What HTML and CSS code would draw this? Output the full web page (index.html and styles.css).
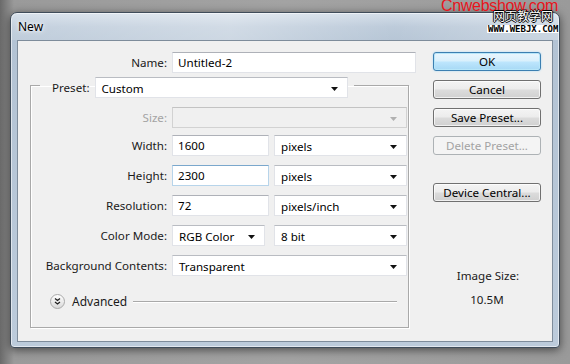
FILE: index.html
```html
<!DOCTYPE html>
<html>
<head>
<meta charset="utf-8">
<link rel="stylesheet" href="styles.css">
</head>
<body>
<div class="window">
  <div class="titlebar"><span class="title">New</span></div>
  <div class="client">
    <div class="leftcol">
      <div class="namerow">
        <label class="lbl">Name:</label>
        <div class="input name">Untitled-2</div>
      </div>
      <fieldset class="group">
        <legend class="legend">
          <span class="lbl">Preset:</span>
          <div class="select preset"><span>Custom</span><svg class="arrow" width="7" height="4" viewBox="0 0 7 4"><path d="M0 0h7L3.5 4z"/></svg></div>
        </legend>
        <div class="rows">
          <div class="row sizerow">
            <label class="lbl disabled">Size:</label>
            <div class="select wide disabled-sel"><span></span><svg class="arrow" width="7" height="4" viewBox="0 0 7 4"><path d="M0 0h7L3.5 4z"/></svg></div>
          </div>
          <div class="row">
            <label class="lbl">Width:</label>
            <div class="pair">
              <div class="input num">1600</div>
              <div class="select unit"><span>pixels</span><svg class="arrow" width="7" height="4" viewBox="0 0 7 4"><path d="M0 0h7L3.5 4z"/></svg></div>
            </div>
          </div>
          <div class="row">
            <label class="lbl">Height:</label>
            <div class="pair">
              <div class="input num hover">2300</div>
              <div class="select unit"><span>pixels</span><svg class="arrow" width="7" height="4" viewBox="0 0 7 4"><path d="M0 0h7L3.5 4z"/></svg></div>
            </div>
          </div>
          <div class="row">
            <label class="lbl">Resolution:</label>
            <div class="pair">
              <div class="input num">72</div>
              <div class="select unit"><span>pixels/inch</span><svg class="arrow" width="7" height="4" viewBox="0 0 7 4"><path d="M0 0h7L3.5 4z"/></svg></div>
            </div>
          </div>
          <div class="row">
            <label class="lbl">Color Mode:</label>
            <div class="pair">
              <div class="select mode"><span>RGB Color</span><svg class="arrow" width="7" height="4" viewBox="0 0 7 4"><path d="M0 0h7L3.5 4z"/></svg></div>
              <div class="select unit"><span>8 bit</span><svg class="arrow" width="7" height="4" viewBox="0 0 7 4"><path d="M0 0h7L3.5 4z"/></svg></div>
            </div>
          </div>
          <div class="row">
            <label class="lbl">Background Contents:</label>
            <div class="select wide"><span>Transparent</span><svg class="arrow" width="7" height="4" viewBox="0 0 7 4"><path d="M0 0h7L3.5 4z"/></svg></div>
          </div>
        </div>
        <div class="advanced">
          <span class="adv-btn"><svg width="15" height="15" viewBox="0 0 15 15"><defs><linearGradient id="g" x1="0" y1="0" x2="0" y2="1"><stop offset="0" stop-color="#ffffff"/><stop offset="1" stop-color="#d9d9d9"/></linearGradient></defs><circle cx="7.5" cy="7.5" r="7" fill="url(#g)" stroke="#a9a9a9"/><path d="M5 4.5l2.5 2 2.5-2M5 8l2.5 2 2.5-2" fill="none" stroke="#222" stroke-width="1.3"/></svg></span>
          <span class="adv-text">Advanced</span>
          <span class="adv-line"></span>
        </div>
      </fieldset>
    </div>
    <div class="rightcol">
      <div class="btn default">OK</div>
      <div class="btn">Cancel</div>
      <div class="btn">Save Preset...</div>
      <div class="btn disabled-btn">Delete Preset...</div>
      <div class="btn device">Device Central...</div>
      <div class="imgsize">Image Size:</div>
      <div class="imgval">10.5M</div>
    </div>
  </div>
</div>
<div class="wm-red">Cnwebshow.com</div>
<div class="wm-cn">网页教学网</div>
<div class="wm-url">WWW.WEBJX.COM</div>
</body>
</html>
```

FILE: styles.css
```css
html, body {
  margin: 0;
  padding: 0;
}
body {
  width: 570px;
  height: 364px;
  overflow: hidden;
  background: linear-gradient(90deg, #6a6a6a 0px, #9a9a9a 14px, #a3a3a3 50%, #9a9a9a 100%);
  font-family: "Noto Sans", "DejaVu Sans", sans-serif;
  font-size: 11.6px;
  color: #1a1a1a;
  position: relative;
  padding-top: 12px;
  box-sizing: border-box;
}
.window {
  margin-left: 10px;
  width: 550px;
  height: 336px;
  box-sizing: border-box;
  border: 1px solid #3f4c5a;
  border-radius: 7px 7px 4px 4px;
  background: linear-gradient(180deg, #d2dde8 0px, #b9c8d8 14px, #b3c3d4 28px, #bccbdb 100%);
  box-shadow: 0 2px 10px rgba(0,0,0,0.55), inset 0 0 0 1px rgba(255,255,255,0.55);
  display: flex;
  flex-direction: column;
}
.titlebar {
  height: 27px;
  padding-left: 7px;
  display: flex;
  align-items: center;
  background: linear-gradient(90deg, rgba(255,255,255,0.15) 0%, rgba(255,255,255,0.35) 40%, rgba(255,255,255,0.05) 70%, rgba(255,255,255,0.3) 100%);
  border-radius: 6px 6px 0 0;
}
.title {
  font-size: 12px;
  color: #000;
  text-shadow: 0 0 6px #fff, 0 0 3px #fff;
  margin-top: 0px;
}
.client {
  margin: 0 6px 5px 6px;
  flex: 1;
  border: 1px solid #7e8c9b;
  background: #f0f0f0;
  display: flex;
  padding-top: 11px;
  box-sizing: border-box;
}
.leftcol {
  width: 398px;
  display: flex;
  flex-direction: column;
}
.lbl {
  text-align: right;
  white-space: nowrap;
  color: #1a1a1a;
}
.lbl.disabled {
  color: #a3a3a3;
}
.namerow {
  display: grid;
  grid-template-columns: 149px 244px;
  column-gap: 5px;
  align-items: center;
  height: 21px;
}
.input {
  height: 21px;
  box-sizing: border-box;
  background: #fff;
  border: 1px solid #e1e3e8;
  border-top-color: #aeb1b8;
  padding: 0 5px;
  line-height: 19px;
  color: #000;
}
.input.hover {
  border-color: #b7d4ea;
  border-top-color: #7aa7cc;
}
.group {
  margin: 0 0 0 12px;
  width: 379px;
  box-sizing: border-box;
  border: 1px solid #a9a9a9;
  box-shadow: inset 1px 1px 0 #ffffff, 1px 1px 0 #ffffff;
  padding: 0 1px 18px 0;
  min-width: 0;
}
.legend {
  margin-left: 9px;
  padding: 4px 6px 0 12px;
  display: flex;
  align-items: center;
  gap: 5px;
}
.select {
  height: 21px;
  box-sizing: border-box;
  background: #fff;
  border: 1px solid #e1e3e8;
  border-top-color: #b9bcc2;
  padding: 0 9px 0 6px;
  display: flex;
  align-items: center;
  justify-content: space-between;
  color: #000;
  padding-top: 2px;
}
.select .arrow {
  fill: #111;
  flex: none;
}
.select.preset {
  width: 253px;
}
.select.wide {
  width: 235px;
}
.select.disabled-sel {
  background: #f0f0f0;
  border-color: #d2d2d2;
  border-top-color: #c3c3c3;
}
.select.disabled-sel .arrow {
  fill: #b0b0b0;
}
.rows {
  padding-top: 9px;
  display: flex;
  flex-direction: column;
  gap: 9px;
}
.row {
  display: grid;
  grid-template-columns: 136px 235px;
  column-gap: 5px;
  align-items: center;
}
.sizerow {
  margin-bottom: -2px;
}
.pair {
  display: flex;
  justify-content: space-between;
  align-items: center;
}
.input.num {
  width: 97px;
}
.select.unit {
  width: 133px;
}
.select.mode {
  width: 93px;
}
.advanced {
  margin-top: 17px;
  height: 16px;
  display: flex;
  align-items: center;
  padding-left: 19px;
  padding-right: 10px;
}
.adv-btn {
  width: 15px;
  height: 15px;
  display: flex;
}
.adv-text {
  margin-left: 7px;
  font-size: 12px;
  color: #1a1a1a;
}
.adv-line {
  flex: 1;
  margin-left: 6px;
  height: 1px;
  background: #a9a9a9;
  box-shadow: 0 1px 0 #fff;
}
.rightcol {
  margin-left: 17px;
  width: 108px;
  display: flex;
  flex-direction: column;
}
.btn {
  height: 19px;
  box-sizing: border-box;
  border: 1px solid #707070;
  border-radius: 3px;
  background: linear-gradient(180deg, #f4f4f4 0%, #ececec 48%, #dcdcdc 52%, #d0d0d0 100%);
  box-shadow: inset 0 0 0 1px rgba(255,255,255,0.7);
  text-align: center;
  line-height: 17px;
  color: #000;
  margin-bottom: 9px;
}
.btn.default {
  border-color: #3c7fb1;
  background: linear-gradient(180deg, #eaf6fd 0%, #d9f0fc 48%, #bee6fd 52%, #a7d9f5 100%);
  box-shadow: inset 0 0 0 1px #b7e6f9, 0 0 2px #9fd7f5;
}
.btn.disabled-btn {
  border-color: #adb2b5;
  background: #f4f4f4;
  color: #a3a3a3;
  box-shadow: none;
}
.btn.device {
  margin-top: 19px;
}
.imgsize {
  margin-top: 57px;
  text-align: center;
  font-size: 11.6px;
  line-height: 16px;
  padding-left: 2px;
}
.imgval {
  margin-top: 8px;
  text-align: center;
  font-size: 11.6px;
  line-height: 16px;
}
.wm-red {
  position: absolute;
  left: 441px;
  top: -3px;
  font-family: "Liberation Sans", sans-serif;
  font-size: 16px;
  color: #e8141c;
  letter-spacing: -0.3px;
}
.wm-cn {
  position: absolute;
  left: 493px;
  top: 8px;
  font-family: "Noto Sans CJK SC", sans-serif;
  font-size: 12px;
  line-height: 16px;
  color: #fff;
  text-shadow: -1px 0 #000, 1px 0 #000, 0 -1px #000, 0 1px #000;
}
.wm-url {
  position: absolute;
  left: 487px;
  top: 25px;
  background: #fff;
  font-family: "DejaVu Sans Mono", monospace;
  font-weight: bold;
  font-size: 9px;
  line-height: 8px;
  color: #000;
  padding: 0 1px;
}
```
